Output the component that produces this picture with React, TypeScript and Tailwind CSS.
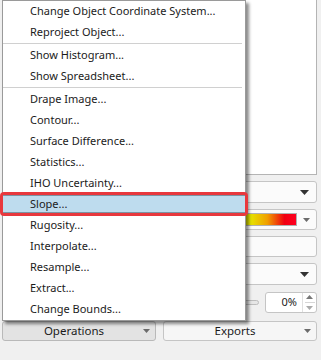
import React from "react";

// Всплывающее меню операций над поверхностью поверх правой панели
const FONT = { fontFamily: '"Noto Sans", "Liberation Sans", sans-serif' };

type Entry = { label: string; sep?: boolean; active?: boolean };

const MENU: Entry[] = [
  { label: "Change Object Coordinate System..." },
  { label: "Reproject Object..." },
  { label: "", sep: true },
  { label: "Show Histogram..." },
  { label: "Show Spreadsheet..." },
  { label: "", sep: true },
  { label: "Drape Image..." },
  { label: "Contour..." },
  { label: "Surface Difference..." },
  { label: "Statistics..." },
  { label: "IHO Uncertainty..." },
  { label: "Slope...", active: true },
  { label: "Rugosity..." },
  { label: "Interpolate..." },
  { label: "Resample..." },
  { label: "Extract..." },
  { label: "Change Bounds..." },
];

function Arrow({ small }: { small?: boolean }) {
  return small ? (
    <svg width="7" height="4" viewBox="0 0 7 4">
      <path d="M0 0h7L3.5 4z" fill="#6b6b6b" />
    </svg>
  ) : (
    <svg width="9" height="5" viewBox="0 0 9 5">
      <path d="M0 0h9L4.5 5z" fill="#333" />
    </svg>
  );
}

function Combo() {
  return (
    <div className="h-[22px] flex items-center rounded-[3px] border border-[#c5c5c5] bg-[#fbfbfb] pr-[7px]">
      <div className="flex-1" />
      <Arrow />
    </div>
  );
}

export default function App() {
  return (
    <div
      className="relative w-[321px] h-[360px] overflow-hidden bg-[#f0f0f0] text-[11px] text-[#1b1b1b]"
      style={FONT}
    >
      {/* панель за меню */}
      <div className="flex flex-col pl-[2px] pr-[4px]">
        <div className="h-[175px] border border-t-0 border-[#b4b4b4] bg-white" />
        <div className="mt-[6px]">
          <Combo />
        </div>
        <div className="mt-[6px] h-[21px] flex items-center rounded-[3px] border border-[#c5c5c5] bg-[#fbfbfb] pl-[4px] pr-[6px]">
          <div className="flex-1 h-[13px] border border-[#b0b0b0] bg-[linear-gradient(to_right,#00a000,#e6e600_84%,#f0a000_90%,#f00010_96%,#ff0020)] mr-[6px]" />
          <Arrow small />
        </div>
        <div className="mt-[6px] h-[21px] rounded-[3px] border border-[#c5c5c5] bg-[#fbfbfb]" />
        <div className="mt-[6px]">
          <Combo />
        </div>
        <div className="mt-[7px] h-[21px] flex items-center">
          <div className="flex-1 flex items-center pr-[6px]">
            <div className="w-full h-[5px] rounded-full border border-[#bdbdbd] bg-[#e6e6e6]" />
          </div>
          <div className="w-[52px] h-[21px] flex rounded-[3px] border border-[#c5c5c5] bg-white">
            <div className="flex-1 flex items-center justify-end pr-[5px] text-[#222]">0%</div>
            <div className="w-[14px] flex flex-col items-center justify-center gap-[3px] border-l border-[#e0e0e0]">
              <svg width="7" height="4" viewBox="0 0 7 4">
                <path d="M0 4h7L3.5 0z" fill="#777" />
              </svg>
              <div className="w-[10px] h-px bg-[#d6d6d6]" />
              <svg width="7" height="4" viewBox="0 0 7 4">
                <path d="M0 0h7L3.5 4z" fill="#aaa" />
              </svg>
            </div>
          </div>
        </div>
        <div className="mt-[8px] flex gap-[7px] h-[20px]">
          <div className="flex-1 flex items-center rounded-[3px] border border-[#b9b9b9] bg-[#e3e3e3] pr-[5px]">
            <div className="flex-1 text-center pl-[2px] text-[11.5px]">Operations</div>
            <Arrow small />
          </div>
          <div className="flex-1 flex items-center rounded-[3px] border border-[#c5c5c5] bg-[#f6f6f6] pr-[5px]">
            <div className="flex-1 text-center pl-[2px] text-[11.5px]">Exports</div>
            <Arrow small />
          </div>
        </div>
      </div>

      {/* меню */}
      <div className="absolute left-[2px] top-0 w-[244px] border border-[#9a9a9a] bg-white shadow-[3px_3px_3px_rgba(0,0,0,0.45)]">
        {MENU.map((m, i) =>
          m.sep ? (
            <div key={i} className="h-[2px] pr-[3px]">
              <div className="h-px bg-[#d0d0d0]" />
            </div>
          ) : (
            <div key={i} className="h-[21px] flex items-center pl-[27px] whitespace-nowrap">
              {m.label}
            </div>
          )
        )}
      </div>

      {/* выделенный пункт с красной рамкой */}
      <div className="absolute left-0 top-[192px] w-[248px] h-[24px] rounded-[4px] border-[3px] border-[#e8383d] bg-[#bedcee] flex items-center pl-[27px]">
        <div className="absolute inset-0 border-y border-[#7b93a3]" />
        Slope...
      </div>
    </div>
  );
}
